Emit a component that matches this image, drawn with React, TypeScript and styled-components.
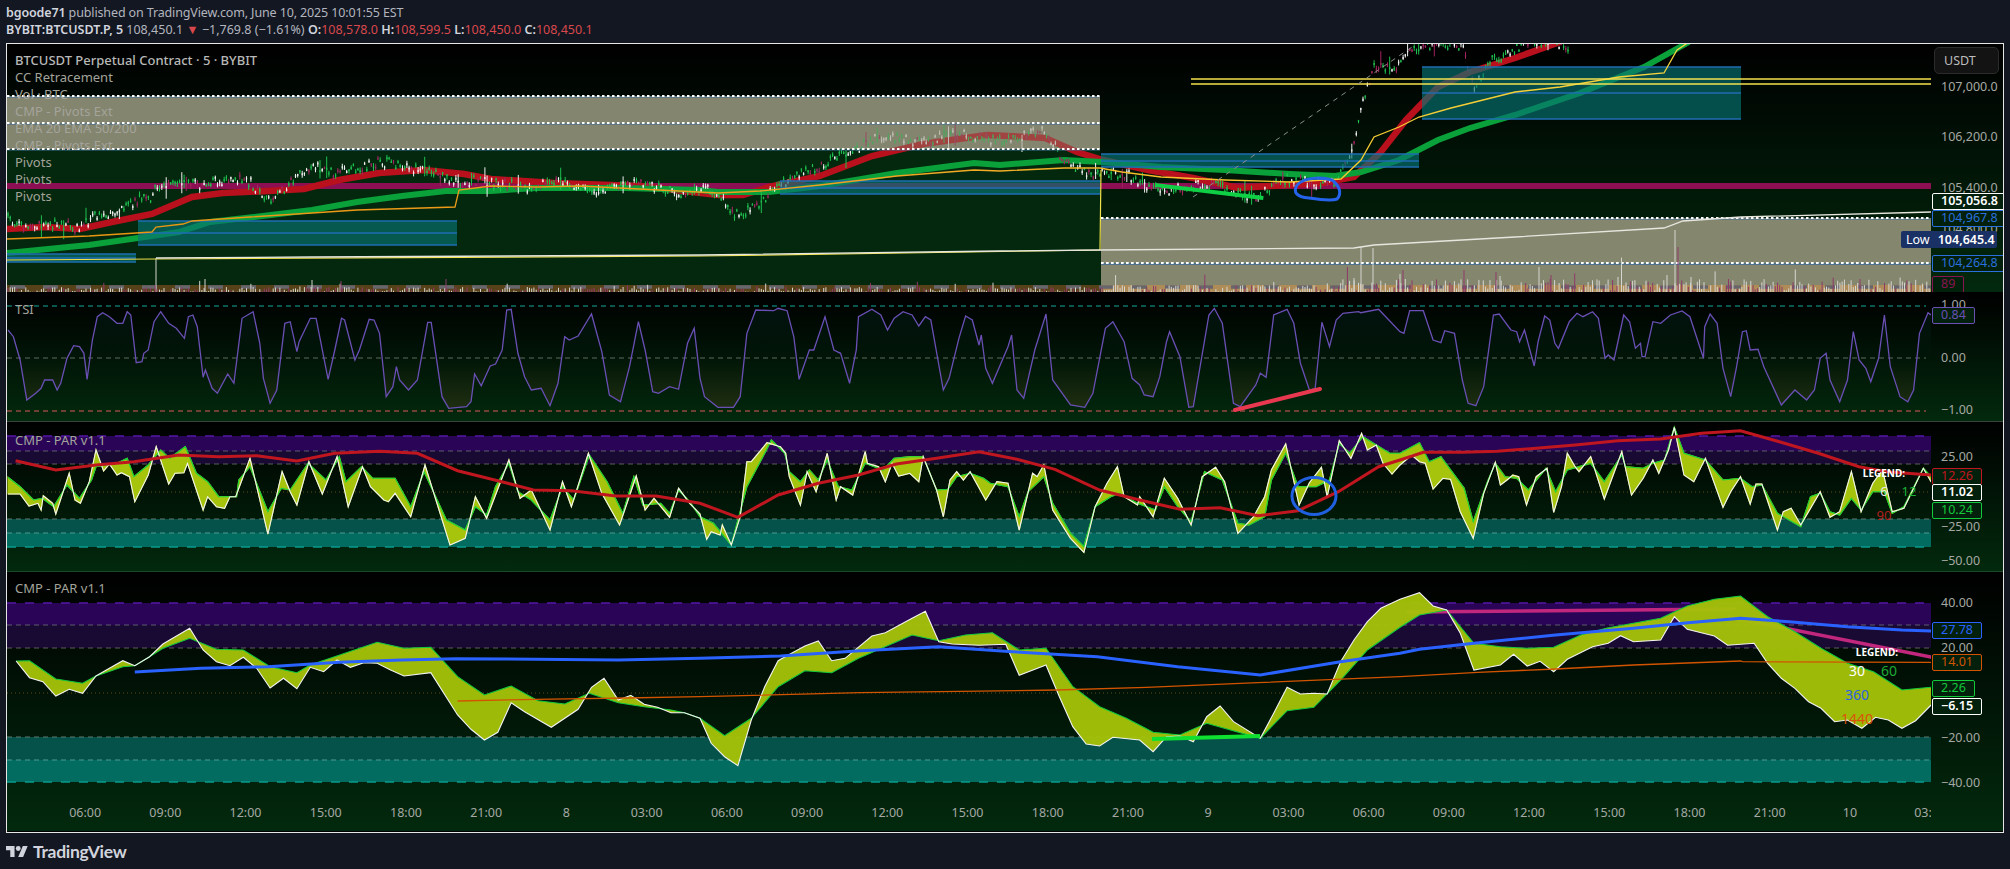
import styled, { createGlobalStyle } from 'styled-components';

type Pt = number[];

const GlobalStyle = createGlobalStyle`
  html, body {
    margin: 0;
    padding: 0;
    background: #131722;
    font-family: "Noto Sans", "Open Sans", sans-serif;
  }
`;

const Page = styled.div`
  width: 2010px;
  height: 869px;
  overflow: hidden;
  background: #131722;
`;

const Header = styled.header`
  height: 43px;
  padding: 4px 6px 0 6px;
  box-sizing: border-box;
  font-size: 12.5px;
  line-height: 17px;
  color: #b2b5be;
`;

const HeaderRow = styled.div<{ $tight?: boolean }>`
  white-space: nowrap;
  letter-spacing: ${(p) => (p.$tight ? '-0.13px' : '0')};
`;

const Strong = styled.span`
  font-weight: 600;
  color: #d1d4dc;
`;

const Down = styled.span`
  color: #d9484c;
`;

const Frame = styled.div`
  width: 1998px;
  height: 790px;
  margin-left: 6px;
  box-sizing: border-box;
  border: 1px solid #e6e6e6;
`;

const Pane = styled.div<{ $h: number; $line?: string }>`
  height: ${(p) => p.$h}px;
  box-sizing: border-box;
  display: flex;
  flex-direction: column;
  overflow: hidden;
  background: linear-gradient(#000000, #02290d);
  border-bottom: 1px solid ${(p) => p.$line || 'transparent'};
`;

const PaneRow = styled.div`
  flex: 1;
  min-height: 0;
  display: flex;
`;

const Plot = styled.div`
  width: 1924px;
  position: relative;
  flex: none;
`;

const ChartSvg = styled.svg`
  display: block;
`;

const Legend = styled.div`
  position: absolute;
  left: 8px;
  top: 8px;
  display: flex;
  flex-direction: column;
  font-size: 13px;
  line-height: 17px;
  color: #a3a39b;
`;

const LegendTitle = styled.div`
  font-weight: 500;
  color: #b8b8b8;
`;

const PaneTitle = styled.div<{ $top: number }>`
  position: absolute;
  left: 8px;
  top: ${(p) => p.$top}px;
  font-size: 13px;
  line-height: 17px;
  color: #a3a39b;
`;

const Axis = styled.div`
  flex: 1;
  position: relative;
`;

const AxisLabel = styled.div<{ $y: number }>`
  position: absolute;
  left: 10px;
  top: ${(p) => p.$y - 9}px;
  font-size: 12.5px;
  line-height: 18px;
  color: #a6a8a4;
  white-space: nowrap;
`;

const Tag = styled.div<{ $y: number; $color: string; $bold?: boolean }>`
  position: absolute;
  left: 1px;
  top: ${(p) => p.$y}px;
  height: 17px;
  box-sizing: border-box;
  padding: 0 8px;
  border: 1.5px solid ${(p) => p.$color};
  border-radius: 2px;
  background: #02200b;
  font-size: 12.5px;
  line-height: 14px;
  font-weight: ${(p) => (p.$bold ? 600 : 400)};
  color: ${(p) => p.$color};
  white-space: nowrap;
`;

const LowTag = styled.div<{ $y: number }>`
  position: absolute;
  left: -30px;
  top: ${(p) => p.$y}px;
  width: 96px;
  height: 17px;
  display: flex;
  gap: 8px;
  padding-left: 5px;
  box-sizing: border-box;
  border-radius: 2px;
  background: #1a3166;
  color: #ffffff;
  font-size: 12.5px;
  line-height: 17px;
`;

const LowValue = styled.span`
  font-weight: 600;
`;

const CurrencyButton = styled.div`
  position: absolute;
  left: 3px;
  top: 3px;
  width: 65px;
  height: 27px;
  box-sizing: border-box;
  padding-left: 9px;
  border: 1px solid #2b2b2b;
  border-radius: 5px;
  background: #131313;
  color: #bcbcbc;
  font-size: 12.5px;
  line-height: 25px;
`;

const TimeAxis = styled.div`
  height: 32px;
  width: 1924px;
  flex: none;
  display: flex;
  padding-left: 38px;
  box-sizing: border-box;
  overflow: hidden;
`;

const TimeLabel = styled.div`
  flex: 0 0 80.23px;
  text-align: center;
  font-size: 12.5px;
  line-height: 28px;
  color: #a6a8a4;
  white-space: nowrap;
`;

const Footer = styled.footer`
  height: 36px;
  padding-left: 6px;
  display: flex;
  align-items: center;
  gap: 5px;
  color: #d1d4dc;
  font-family: Lato, "Noto Sans", sans-serif;
  font-size: 17.5px;
  font-weight: 700;
  letter-spacing: -0.3px;
`;

// flat lists read off the reference, one list per zoomed crop
const z = (ox: number, sx: number, oy: number, a: number[]): Pt[] => {
  const out: Pt[] = [];
  for (let i = 0; i < a.length; i += 2) out.push([ox + a[i] / sx, oy + a[i + 1] / 3]);
  return out;
};
const pts = (p: Pt[]) => p.map((q) => q[0].toFixed(1) + ',' + q[1].toFixed(1)).join(' ');
const between = (a: Pt[], b: Pt[]) => pts([...a, ...[...b].reverse()]);

const at = (path: Pt[], x: number) => {
  for (let i = 1; i < path.length; i++) {
    if (x <= path[i][0]) {
      const t = (x - path[i - 1][0]) / (path[i][0] - path[i - 1][0]);
      return path[i - 1][1] + t * (path[i][1] - path[i - 1][1]);
    }
  }
  return path[path.length - 1][1];
};

let seed = 71;
const rnd = () => {
  seed = (seed * 16807) % 2147483647;
  return seed / 2147483647;
};

const STEP = 2.2286;

const mid: Pt[] = [[7, 217], [45, 227], [80, 230], [94, 213], [125, 207], [152, 200], [156, 187], [187, 177], [205, 187], [250, 180], [268, 197], [286, 187], [312, 170], [335, 170], [357, 165], [402, 168], [424, 165], [446, 177], [459, 187], [509, 180], [536, 190], [580, 183], [603, 187], [634, 185], [700, 190], [718, 199], [737, 215], [769, 192], [820, 167], [833, 154], [897, 138], [974, 138], [1045, 135], [1064, 160], [1103, 173], [1154, 186], [1193, 187], [1258, 193], [1290, 183], [1335, 180], [1354, 147], [1364, 103], [1374, 70], [1399, 63], [1412, 45], [1464, 50], [1467, 63], [1474, 88], [1490, 57], [1528, 45], [1560, 44]];

const buildCandles = () => {
  const wick: Record<string, string> = { up: '', flat: '', down: '' };
  const body: Record<string, string> = { up: '', flat: '', down: '' };
  for (let x = 8; x < 1570; x += STEP) {
    const y = at(mid, x) + 4 * Math.sin(x / 13) + (rnd() - 0.5) * 10;
    const big = rnd() > 0.93 ? 10 : 0;
    const t = y - 1 - rnd() * 3 - big * rnd();
    const b = y + 1 + rnd() * 3 + big * rnd();
    const r = rnd();
    const k = r < 0.47 ? 'up' : r < 0.8 ? 'flat' : 'down';
    wick[k] += `M${x.toFixed(1)} ${t.toFixed(1)}V${b.toFixed(1)}`;
    body[k] += `M${x.toFixed(1)} ${(y - 1).toFixed(1)}V${(y + 1).toFixed(1)}`;
  }
  return { wick, body };
};

const buildVolume = () => {
  let light = '';
  let dark = '';
  for (let x = 8; x < 1930; x += STEP) {
    const late = x > 1100 && x < 1340 ? 1.4 : x >= 1340 ? 2.6 : 1;
    const h = 1 + rnd() * 5 * late + (rnd() > 0.94 ? rnd() * 9 * late : 0);
    const s = `M${x.toFixed(1)} 293V${(293 - h).toFixed(1)}`;
    if (rnd() > 0.68) dark += s;
    else light += s;
  }
  const lightSpikes = [[156, 258], [205, 279], [312, 280], [1354, 278], [1361, 247], [1373, 248], [1618, 277], [1667, 275], [1675, 230], [1691, 277], [1400, 274], [1500, 276]];
  const darkSpikes = [[341, 281], [446, 279], [1403, 270], [1464, 270], [1496, 272], [1551, 275], [1678, 247]];
  lightSpikes.forEach((s) => (light += `M${s[0]} 293V${s[1]}`));
  darkSpikes.forEach((s) => (dark += `M${s[0]} 293V${s[1]}`));
  return { light, dark };
};

const candles = buildCandles();
const volume = buildVolume();

const ema20: Pt[] = [[7, 229], [45, 227], [80, 229], [112, 222], [152, 214], [192, 197], [223, 193], [268, 191], [304, 189], [339, 180], [379, 173], [424, 170], [464, 174], [491, 179], [554, 183], [640, 186], [718, 195], [743, 195], [769, 187], [820, 176], [872, 156], [923, 144], [987, 135], [1045, 138], [1077, 152], [1103, 160], [1148, 170], [1193, 178], [1238, 188], [1271, 186], [1322, 183], [1354, 177], [1380, 153], [1406, 120], [1438, 87], [1470, 72], [1515, 58], [1560, 42]];
const ema50: Pt[] = [[7, 253], [89, 245], [138, 238], [179, 232], [210, 222], [254, 217], [312, 210], [357, 202], [402, 196], [446, 191], [491, 191], [536, 188], [625, 188], [700, 190], [718, 192], [769, 192], [820, 186], [897, 173], [974, 163], [1000, 165], [1064, 160], [1103, 162], [1161, 167], [1225, 170], [1290, 174], [1335, 176], [1361, 172], [1399, 160], [1438, 140], [1470, 128], [1515, 115], [1580, 93], [1644, 67], [1689, 42]];
const ema200: Pt[] = [[7, 239], [89, 236], [152, 232], [156, 227], [183, 224], [192, 221], [250, 217], [312, 213], [357, 210], [455, 207], [459, 190], [491, 186], [536, 187], [580, 186], [718, 193], [760, 191], [820, 185], [897, 176], [974, 170], [1000, 171], [1064, 168], [1100, 168], [1122, 172], [1161, 177], [1225, 180], [1290, 182], [1341, 179], [1361, 160], [1374, 137], [1399, 127], [1419, 117], [1451, 108], [1515, 92], [1560, 87], [1619, 77], [1664, 73], [1677, 50], [1689, 42]];
const vwap: Pt[] = [[156, 258], [312, 257], [700, 255], [1000, 251], [1100, 250], [1354, 248], [1374, 245], [1515, 237], [1664, 228], [1683, 221], [1741, 217], [1931, 212]];
const yellowLine: Pt[] = [[7, 260], [156, 259], [700, 256], [1100, 250], [1101, 170]];

const tsi: Pt[] = [
  ...z(0, 2.24, 290, [18, 120, 30, 140, 45, 210, 60, 330, 80, 310, 92, 295, 100, 270, 118, 270, 128, 300, 136, 280, 150, 205, 165, 167, 178, 170, 188, 190, 195, 268, 207, 150, 218, 80, 230, 68, 245, 80, 262, 100, 275, 100, 285, 65, 293, 75, 305, 218, 318, 215, 322, 190, 332, 180, 345, 95, 360, 65, 378, 100, 395, 115, 413, 145, 422, 80, 432, 75, 442, 110, 455, 262, 460, 240, 475, 295, 487, 310, 510, 252, 524, 280, 542, 85, 567, 65, 582, 160, 590, 265, 605, 340, 620, 300, 638, 100, 650, 95, 665, 185, 670, 155, 695, 85, 708, 85, 735, 268, 750, 180, 765, 85, 772, 90, 795, 210, 805, 180, 827, 88, 838, 90, 850, 130, 865, 320, 880, 290, 888, 230, 895, 270, 915, 300, 935, 270, 958, 97, 966, 97, 990, 320, 1005, 355, 1045, 350, 1055, 335, 1063, 252, 1078, 287, 1098, 228, 1110, 222, 1125, 180, 1135, 60, 1145, 58, 1160, 190, 1175, 260, 1190, 300, 1212, 295, 1232, 347, 1250, 280, 1265, 140, 1275, 150, 1295, 138, 1325, 72, 1348, 185, 1365, 315, 1390, 335, 1410, 230, 1430, 95, 1445, 180, 1462, 305, 1475, 310, 1500, 290, 1520, 298, 1540, 160, 1555, 115]),
  ...z(700, 2.24, 290, [0, 265, 10, 320, 40, 352, 75, 352, 90, 320, 105, 130, 125, 60, 165, 62, 175, 55, 195, 62, 210, 140, 222, 268, 245, 180, 255, 180, 280, 80, 300, 180, 315, 190, 335, 280, 350, 180, 355, 80, 385, 58, 405, 75, 420, 120, 435, 85, 455, 65, 475, 75, 490, 108, 505, 80, 517, 90, 545, 300, 558, 265, 580, 145, 595, 78, 610, 90, 625, 165, 630, 135, 640, 235, 655, 280, 690, 170, 698, 135, 710, 300, 725, 325, 750, 180, 775, 72, 790, 270, 830, 345, 862, 352, 880, 310, 908, 115, 925, 95, 950, 155, 968, 265, 985, 285, 995, 315, 1015, 320, 1030, 260, 1045, 155, 1052, 125, 1075, 200, 1095, 352, 1105, 350, 1140, 75, 1152, 55, 1170, 100, 1195, 340, 1210, 350, 1245, 285, 1255, 250, 1268, 262, 1285, 75, 1315, 58, 1330, 100, 1345, 220, 1365, 300, 1378, 295, 1393, 97, 1410, 170, 1425, 90, 1440, 70, 1475, 65, 1480, 68, 1520, 58]),
  ...z(1400, 2.57, 290, [0, 125, 10, 130, 25, 62, 60, 62, 85, 150, 105, 158, 115, 122, 140, 130, 160, 270, 175, 340, 195, 347, 215, 290, 240, 75, 255, 72, 285, 120, 300, 125, 307, 155, 320, 120, 345, 228, 355, 155, 372, 78, 385, 90, 398, 160, 407, 175, 435, 95, 455, 70, 470, 80, 495, 65, 510, 85, 527, 205, 535, 195, 550, 210, 575, 75, 590, 95, 605, 175, 618, 160, 622, 200, 630, 200, 650, 95, 670, 100, 695, 75, 725, 63, 745, 80, 780, 205, 783, 110, 797, 72, 815, 100, 830, 235, 850, 320, 865, 230, 880, 125, 890, 122, 900, 180, 920, 178, 935, 230, 980, 345, 1015, 300, 1045, 330, 1065, 300, 1080, 205, 1095, 190, 1105, 270, 1130, 335, 1150, 270, 1165, 125, 1180, 210, 1197, 235, 1210, 275, 1230, 205, 1245, 75, 1260, 230, 1285, 320, 1305, 335, 1320, 300, 1335, 130, 1357, 68, 1365, 75]),
];

const par1White: Pt[] = [
  ...z(0, 2.24, 290, [18, 612, 45, 612, 65, 648, 85, 640, 92, 660, 97, 617, 118, 640, 125, 672, 155, 550, 168, 630, 180, 640, 200, 575, 215, 480, 232, 543, 245, 522, 262, 555, 272, 548, 290, 560, 302, 635, 332, 555, 350, 470, 378, 582, 392, 550, 412, 548, 420, 520, 455, 660, 465, 620, 485, 650, 503, 655, 515, 620, 528, 620, 560, 505, 600, 732, 632, 545, 650, 605, 665, 645, 692, 515, 722, 612, 755, 500, 780, 650, 812, 530, 830, 590, 860, 630, 870, 635, 885, 610, 920, 680, 952, 525, 1008, 765, 1042, 745, 1065, 620, 1090, 685, 1140, 510, 1165, 625, 1190, 600, 1232, 720, 1260, 575, 1280, 650, 1318, 490, 1348, 610, 1388, 705, 1425, 558, 1445, 660, 1465, 625, 1500, 682, 1520, 595, 1545, 640]),
  ...z(700, 2.24, 290, [0, 672, 15, 748, 25, 725, 45, 735, 50, 705, 70, 765, 90, 680, 105, 515, 115, 515, 150, 458, 180, 470, 192, 490, 200, 560, 225, 645, 240, 545, 260, 605, 285, 490, 305, 630, 315, 590, 342, 615, 370, 485, 375, 520, 400, 530, 415, 575, 430, 520, 445, 558, 470, 550, 490, 575, 500, 500, 530, 600, 545, 680, 560, 570, 575, 545, 590, 570, 605, 545, 640, 630, 665, 575, 690, 580, 715, 720, 745, 550, 755, 560, 770, 525, 790, 660, 830, 745, 860, 787, 885, 650, 912, 580, 935, 530, 950, 620, 980, 645, 985, 620, 1015, 680, 1040, 565, 1070, 625, 1100, 705, 1125, 560, 1155, 532, 1175, 575, 1205, 730, 1240, 680, 1265, 620, 1280, 540, 1312, 462, 1342, 645, 1365, 578, 1392, 532, 1405, 620, 1432, 452, 1458, 505, 1482, 430, 1495, 480, 1515, 465, 1530, 520, 1550, 552]),
  ...z(1400, 2.57, 290, [0, 525, 30, 495, 50, 515, 65, 520, 85, 597, 110, 565, 130, 568, 155, 665, 188, 745, 215, 610, 245, 517, 258, 585, 275, 570, 290, 555, 305, 560, 325, 645, 350, 560, 378, 535, 395, 667, 415, 590, 430, 490, 450, 530, 460, 545, 490, 500, 525, 627, 570, 485, 595, 615, 625, 565, 650, 510, 665, 550, 690, 480, 705, 412, 730, 555, 755, 575, 785, 505, 830, 652, 850, 605, 875, 560, 900, 642, 915, 582, 930, 582, 970, 720, 985, 665, 1005, 655, 1030, 705, 1080, 605, 1105, 682, 1130, 665, 1160, 545, 1185, 665, 1215, 580, 1240, 540, 1265, 665, 1295, 655, 1345, 535, 1365, 575]),
];
const par1Green: Pt[] = [
  ...z(0, 2.24, 290, [18, 562, 45, 590, 75, 630, 95, 625, 120, 650, 150, 585, 178, 625, 205, 570, 215, 530, 262, 520, 285, 505, 300, 560, 332, 525, 360, 480, 380, 505, 415, 470, 440, 550, 465, 575, 490, 620, 530, 620, 535, 570, 560, 530, 600, 665, 630, 595, 650, 600, 690, 520, 730, 570, 760, 500, 775, 575, 810, 530, 835, 565, 885, 565, 920, 650, 950, 545, 1000, 690, 1042, 720, 1065, 650, 1090, 675, 1110, 590, 1140, 520, 1160, 605, 1190, 630, 1232, 690, 1260, 590, 1285, 630, 1320, 495, 1360, 575, 1395, 670, 1420, 560, 1440, 645, 1480, 640, 1500, 670, 1520, 600, 1545, 635]),
  ...z(700, 2.24, 290, [0, 680, 30, 700, 70, 765, 105, 590, 145, 490, 160, 450, 190, 490, 200, 545, 225, 575, 245, 540, 265, 570, 285, 510, 310, 590, 340, 600, 370, 520, 410, 540, 435, 505, 470, 500, 500, 500, 530, 600, 555, 598, 575, 560, 605, 550, 635, 565, 650, 580, 690, 590, 715, 680, 735, 605, 770, 560, 790, 640, 830, 730, 860, 770, 885, 650, 920, 620, 940, 610, 980, 640, 1020, 660, 1040, 590, 1070, 650, 1100, 695, 1130, 545, 1170, 570, 1205, 700, 1230, 705, 1265, 680, 1280, 570, 1312, 490, 1340, 590, 1380, 590, 1410, 570, 1432, 460, 1455, 490, 1485, 440, 1515, 465, 1545, 490]),
  ...z(1400, 2.57, 290, [0, 490, 50, 458, 75, 515, 105, 500, 165, 595, 188, 695, 225, 575, 245, 520, 270, 560, 300, 565, 330, 600, 375, 535, 400, 605, 430, 540, 490, 520, 525, 575, 570, 495, 580, 530, 625, 535, 650, 520, 680, 510, 705, 412, 730, 490, 785, 510, 830, 570, 875, 565, 905, 590, 930, 585, 970, 670, 1030, 710, 1055, 620, 1080, 610, 1105, 665, 1130, 675, 1160, 625, 1185, 660, 1215, 605, 1245, 605, 1265, 670, 1295, 650, 1345, 535, 1365, 560]),
];
const par1Red: Pt[] = [
  ...z(0, 2.24, 290, [35, 512, 125, 540, 215, 525, 300, 515, 400, 495, 490, 500, 575, 497, 665, 513, 750, 490, 850, 484, 935, 490, 1025, 542, 1115, 572, 1195, 600, 1280, 602, 1380, 618, 1470, 618]),
  ...z(700, 2.24, 290, [0, 640, 85, 682, 175, 615, 265, 580, 355, 555, 440, 522, 530, 505, 625, 485, 710, 508, 795, 538, 895, 600, 985, 630, 1075, 658, 1165, 653, 1250, 677, 1340, 662, 1430, 605, 1520, 530]),
  ...z(1400, 2.57, 290, [0, 510, 60, 487, 160, 487, 250, 484, 350, 475, 450, 465, 560, 452, 670, 447, 775, 430, 875, 422, 975, 455, 1075, 490, 1180, 530, 1250, 545, 1365, 555]),
];

const par2White: Pt[] = [
  ...z(0, 2.24, 570, [36, 273, 66, 323, 96, 335, 125, 378, 155, 358, 185, 370, 215, 318, 245, 295, 275, 272, 302, 287, 335, 260, 365, 222, 425, 175, 455, 240, 485, 275, 515, 287, 545, 262, 575, 295, 605, 354, 635, 325, 665, 356, 695, 292, 725, 305, 755, 270, 785, 292, 815, 278, 845, 280, 875, 300, 905, 318, 965, 308, 1025, 435, 1055, 478, 1085, 510, 1115, 487, 1145, 398, 1175, 425, 1235, 472, 1295, 418, 1325, 352, 1353, 325, 1385, 390, 1413, 376, 1443, 403, 1473, 412, 1503, 428, 1533, 428]),
  ...z(700, 2.24, 570, [0, 445, 25, 520, 55, 560, 85, 587, 115, 450, 145, 350, 175, 272, 205, 250, 235, 228, 265, 213, 295, 272, 325, 265, 385, 198, 415, 188, 475, 145, 505, 124, 535, 215, 565, 222, 625, 226, 685, 223, 715, 316, 775, 285, 805, 380, 835, 470, 865, 522, 895, 528, 925, 502, 985, 510, 1015, 545, 1045, 500, 1075, 498, 1105, 515, 1135, 440, 1165, 408, 1195, 455, 1255, 505, 1285, 430, 1315, 352, 1345, 372, 1375, 370, 1405, 372, 1435, 275, 1465, 210, 1495, 155, 1525, 115]),
  ...z(1400, 2.57, 570, [0, 88, 50, 68, 85, 108, 120, 120, 155, 190, 190, 300, 258, 285, 292, 253, 327, 288, 360, 274, 395, 305, 430, 268, 495, 230, 535, 220, 567, 197, 600, 215, 670, 210, 705, 140, 738, 178, 808, 198, 842, 226, 910, 220, 945, 280, 980, 325, 1015, 355, 1050, 395, 1082, 415, 1117, 455, 1150, 450, 1187, 475, 1222, 442, 1255, 450, 1290, 475, 1325, 452, 1365, 405]),
];
const par2Green: Pt[] = [
  ...z(0, 2.24, 570, [36, 273, 66, 272, 125, 327, 185, 340, 215, 318, 275, 290, 302, 287, 335, 260, 365, 235, 425, 205, 485, 238, 545, 240, 605, 290, 665, 308, 695, 285, 845, 217, 905, 235, 965, 232, 1025, 320, 1085, 375, 1145, 348, 1205, 392, 1265, 402, 1320, 370, 1385, 398, 1443, 410, 1503, 420, 1533, 428]),
  ...z(700, 2.24, 570, [0, 445, 55, 497, 115, 445, 175, 350, 235, 302, 295, 308, 355, 265, 475, 195, 535, 212, 595, 195, 655, 188, 715, 240, 775, 235, 835, 350, 895, 410, 955, 445, 1015, 487, 1075, 495, 1135, 460, 1255, 505, 1315, 422, 1375, 412, 1435, 330, 1495, 240]),
  ...z(1400, 2.57, 570, [0, 172, 50, 135, 120, 120, 190, 220, 258, 230, 327, 235, 395, 232, 465, 195, 530, 175, 670, 145, 738, 108, 808, 88, 875, 78, 945, 140, 1015, 185, 1082, 235, 1150, 280, 1217, 305, 1290, 360, 1365, 352]),
];
const par2Blue: Pt[] = [
  ...z(0, 2.24, 570, [302, 306, 450, 295, 600, 290, 760, 277, 900, 270, 1020, 266, 1200, 268, 1385, 270]),
  ...z(700, 2.24, 570, [0, 265, 180, 258, 350, 243, 535, 230, 700, 245, 890, 260, 1070, 290, 1255, 315, 1435, 275]),
  ...z(1400, 2.57, 570, [0, 250, 50, 238, 190, 220, 400, 195, 600, 175, 740, 158, 875, 145, 1000, 155, 1150, 170, 1290, 180, 1365, 183]),
];
const par2Orange: Pt[] = [
  ...z(0, 2.24, 570, [1025, 393, 1200, 388, 1400, 384]),
  ...z(700, 2.24, 570, [0, 380, 360, 368, 800, 360, 1000, 352, 1250, 338]),
  ...z(1400, 2.57, 570, [0, 320, 200, 307, 400, 297, 600, 285, 875, 273, 880, 275, 1365, 277]),
];

const TIME_LABELS = ['06:00', '09:00', '12:00', '15:00', '18:00', '21:00', '8', '03:00', '06:00', '09:00', '12:00', '15:00', '18:00', '21:00', '9', '03:00', '06:00', '09:00', '12:00', '15:00', '18:00', '21:00', '10', '03:00'];

const LEGEND = ['CC Retracement', 'Vol · BTC', 'CMP - Pivots Ext', 'EMA 20 EMA 50/200', 'CMP - Pivots Ext', 'Pivots', 'Pivots', 'Pivots'];

const Box = ({ x, w, y1, y2, y3 }: { x: number; w: number; y1: number; y2: number; y3: number }) => (
  <g>
    <rect x={x} y={y1} width={w} height={y3 - y1} fill="rgb(6,115,115)" fillOpacity={0.65} />
    {[y1, y2, y3].map((y) => (
      <line key={y} x1={x} x2={x + w} y1={y} y2={y} stroke="#1f6db3" strokeWidth={1.5} />
    ))}
  </g>
);

const GrayBand = ({ x, w, y1, y2, y3 }: { x: number; w: number; y1: number; y2: number; y3: number }) => (
  <g>
    {[y1, y2, y3].map((y) => (
      <g key={y}>
        <line x1={x} x2={x + w} y1={y + 1} y2={y + 1} stroke="#3f6d96" strokeWidth={1} />
        <line x1={x} x2={x + w} y1={y} y2={y} stroke="#ffffff" strokeWidth={2} strokeDasharray="2.5 2.5" />
      </g>
    ))}
  </g>
);

const MainChart = () => (
  <ChartSvg width={1924} height={249} viewBox="7 44 1924 249">
    <defs>
      <linearGradient id="ema200Stroke" gradientUnits="userSpaceOnUse" x1="7" x2="1689" y1="0" y2="0">
        <stop offset="0" stopColor="#e8940f" />
        <stop offset="0.5" stopColor="#f0a020" />
        <stop offset="0.75" stopColor="#f7c82e" />
        <stop offset="1" stopColor="#f5d53f" />
      </linearGradient>
    </defs>
    <rect x={7} y={149} width={1093} height={144} fill="#03280e" />
    <rect x={7} y={96} width={1093} height={53} fill="#84866e" />
    <rect x={1101} y={218} width={830} height={75} fill="#84866e" />
    <rect x={7} y={183} width={1924} height={6} fill="#8b0f52" />

    <polyline points={pts(ema20)} fill="none" stroke="#b8101c" strokeWidth={6.5} />
    <polyline points={pts(ema50)} fill="none" stroke="#0aa03a" strokeWidth={6} />
    <path d={candles.wick.up} stroke="#1fbf4f" strokeWidth={1} />
    <path d={candles.wick.flat} stroke="#f0f0f0" strokeWidth={1} />
    <path d={candles.wick.down} stroke="#a0245f" strokeWidth={1} />
    <path d={candles.body.up} stroke="#1fbf4f" strokeWidth={1.3} />
    <path d={candles.body.flat} stroke="#f0f0f0" strokeWidth={1.3} />
    <path d={candles.body.down} stroke="#a0245f" strokeWidth={1.3} />

    <rect x={7} y={96} width={1093} height={53} fill="#84866e" fillOpacity={0.45} />
    <Box x={138} w={319} y1={221} y2={233} y3={245} />
    <Box x={7} w={129} y1={254} y2={258} y3={262} />
    <Box x={780} w={320} y1={181} y2={188} y3={194} />
    <Box x={1101} w={318} y1={154} y2={161} y3={167} />
    <Box x={1422} w={319} y1={67} y2={93} y3={119} />

    <GrayBand x={7} w={1093} y1={96} y2={123} y3={149} />
    <GrayBand x={1101} w={830} y1={218} y2={263} y3={263} />

    <rect x={7} y={285} width={1093} height={8} fill="rgb(255,117,46)" fillOpacity={0.33} />
    <rect x={1101} y={285} width={830} height={8} fill="rgb(255,150,46)" fillOpacity={0.35} />
    <line x1={10} x2={1931} y1={287} y2={287} stroke="#66666c" strokeWidth={3.5} strokeDasharray="15 18" />
    <path d={volume.light} stroke="#d6d6d0" strokeWidth={1} />
    <path d={volume.dark} stroke="#8f3a68" strokeWidth={1} />

    <polyline points={pts(ema200)} fill="none" stroke="url(#ema200Stroke)" strokeWidth={1.3} />
    <polyline points={pts(yellowLine)} fill="none" stroke="#f2e24a" strokeWidth={1.2} />
    <polyline points={pts(vwap)} fill="none" stroke="#e6e6df" strokeWidth={1.3} />
    <line x1={1191} x2={1931} y1={79} y2={79} stroke="#f5e24f" strokeWidth={1.5} />
    <line x1={1191} x2={1931} y1={84} y2={84} stroke="#f5e24f" strokeWidth={1.5} />
    <line x1={1193} x2={1412} y1={197} y2={47} stroke="#8a8f8a" strokeWidth={1} strokeDasharray="5 5" />

    <line x1={1155} x2={1263} y1={185} y2={198} stroke="#0fcf45" strokeWidth={4} />
    <path d="M1297 185C1293 192 1296 197 1309 198C1322 200 1332 201 1337 199C1342 194 1340 186 1332 180C1322 177 1305 177 1297 185" fill="none" stroke="#2563eb" strokeWidth={3} />
  </ChartSvg>
);

const TsiChart = () => (
  <ChartSvg width={1924} height={129} viewBox="7 293 1924 129">
    <defs>
      <linearGradient id="tsiFill" gradientUnits="userSpaceOnUse" x1="0" x2="0" y1="306" y2="411">
        <stop offset="0" stopColor="#0a5a55" stopOpacity={0.16} />
        <stop offset="0.5" stopColor="#0a5a55" stopOpacity={0} />
        <stop offset="0.5" stopColor="#7a4a20" stopOpacity={0} />
        <stop offset="1" stopColor="#7a4a20" stopOpacity={0.25} />
      </linearGradient>
    </defs>
    <polygon points={pts([[8, 358], ...tsi, [1931, 358]])} fill="url(#tsiFill)" />
    <line x1={7} x2={1926} y1={306} y2={306} stroke="#12a89a" strokeDasharray="5 4" />
    <line x1={7} x2={1926} y1={358} y2={358} stroke="#5f6a63" strokeDasharray="5 4" />
    <line x1={7} x2={1926} y1={411} y2={411} stroke="#d85a5a" strokeDasharray="5 4" />
    <polyline points={pts(tsi)} fill="none" stroke="#6a4fb5" strokeWidth={1.3} />
    <line x1={1235} x2={1320} y1={410} y2={389} stroke="#e8384f" strokeWidth={4} strokeLinecap="round" />
  </ChartSvg>
);

const Bands = ({ y, stops }: { y: number[]; stops: number }) => (
  <g>
    <rect x={7} y={y[0]} width={1924} height={y[1] - y[0]} fill="#2a0557" />
    <rect x={7} y={y[1]} width={1924} height={y[2] - y[1]} fill="#190a33" />
    <rect x={7} y={y[4]} width={1924} height={y[5] - y[4]} fill="#04524a" />
    <rect x={7} y={y[5]} width={1924} height={y[6] - y[5]} fill="#026c60" />
    <line x1={7} x2={1931} y1={y[0]} y2={y[0]} stroke="#5417a6" strokeWidth={1.5} strokeDasharray="9 9" />
    <line x1={7} x2={1931} y1={y[1]} y2={y[1]} stroke="#5f5a70" strokeDasharray="5 4" />
    <line x1={7} x2={1931} y1={y[2]} y2={y[2]} stroke="#5c5c5c" strokeDasharray="5 4" />
    <line x1={7} x2={1931} y1={y[3]} y2={y[3]} stroke="#5c4f14" strokeDasharray="1 3" />
    <line x1={7} x2={1931} y1={y[4]} y2={y[4]} stroke="#5c7a70" strokeDasharray="5 4" />
    <line x1={7} x2={1931} y1={y[5]} y2={y[5]} stroke="#4d9a8e" strokeDasharray="5 4" />
    <line x1={7} x2={1931} y1={y[6]} y2={y[6]} stroke="#089a8e" strokeWidth={1.5} strokeDasharray={`9 ${stops}`} />
  </g>
);

const LegendNote = ({ x, y, color, size = 13, bold, children }: { x: number; y: number; color: string; size?: number; bold?: boolean; children: string }) => (
  <text x={x} y={y} fill={color} fontSize={size} fontWeight={bold ? 700 : 400} textAnchor="middle" dominantBaseline="middle" fontFamily='"Noto Sans", sans-serif'>
    {children}
  </text>
);

const ParFast = () => (
  <ChartSvg width={1924} height={150} viewBox="7 422 1924 150">
    <Bands y={[436, 451, 464, 492, 519, 533, 547]} stops={9} />
    <polygon points={between(par1White, par1Green)} fill="#a6c40c" stroke="#a6c40c" strokeWidth={1.2} />
    <polyline points={pts(par1Green)} fill="none" stroke="#14d23c" strokeWidth={1.1} />
    <polyline points={pts(par1White)} fill="none" stroke="#f2f2f2" strokeWidth={1.1} />
    <polyline points={pts(par1Red)} fill="none" stroke="#c0161f" strokeWidth={3} />
    <ellipse cx={1314} cy={496} rx={22} ry={18.5} fill="none" stroke="#1f5fe0" strokeWidth={3} />
    <LegendNote x={1884} y={474} color="#ffffff" size={10} bold>LEGEND:</LegendNote>
    <LegendNote x={1884} y={493} color="#e8e8e8">6</LegendNote>
    <LegendNote x={1909} y={493} color="#19b536">12</LegendNote>
    <LegendNote x={1884} y={517} color="#b01e1e">90</LegendNote>
  </ChartSvg>
);

const ParSlow = () => (
  <ChartSvg width={1924} height={228} viewBox="7 572 1924 228">
    <Bands y={[603, 625, 648, 693, 737, 760, 782]} stops={9} />
    <polyline points="1408,612 1734,609" fill="none" stroke="#c2277e" strokeWidth={3.5} strokeLinecap="round" />
    <polyline points="1729,617 1931,657" fill="none" stroke="#c2277e" strokeWidth={3.5} strokeLinecap="round" />
    <polygon points={between(par2White, par2Green)} fill="#a4c208" fillOpacity={0.96} />
    <polyline points={pts(par2Green)} fill="none" stroke="#14c83c" strokeWidth={1.1} />
    <polyline points={pts(par2White)} fill="none" stroke="#f2f2f2" strokeWidth={1.1} />
    <polyline points={pts(par2Orange)} fill="none" stroke="#d35400" strokeWidth={1.3} />
    <polyline points={pts(par2Blue)} fill="none" stroke="#2962ff" strokeWidth={3} />
    <line x1={1152} x2={1260} y1={739} y2={736} stroke="#10e030" strokeWidth={4} />
    <LegendNote x={1877} y={653} color="#ffffff" size={10} bold>LEGEND:</LegendNote>
    <LegendNote x={1857} y={672} color="#ffffff" size={14}>30</LegendNote>
    <LegendNote x={1889} y={672} color="#1faa34" size={14}>60</LegendNote>
    <LegendNote x={1857} y={696} color="#2a62e0" size={14}>360</LegendNote>
    <LegendNote x={1857} y={720} color="#d9520a" size={14}>1440</LegendNote>
  </ChartSvg>
);

export default function App() {
  return (
    <>
      <GlobalStyle />
      <Page>
        <Header>
          <HeaderRow $tight>
            <Strong>bgoode71</Strong> published on TradingView.com, June 10, 2025 10:01:55 EST
          </HeaderRow>
          <HeaderRow>
            <Strong>BYBIT:BTCUSDT.P, 5</Strong> 108,450.1 <Down>▼</Down> −1,769.8 (−1.61%){' '}
            <Strong>O:</Strong><Down>108,578.0</Down> <Strong>H:</Strong><Down>108,599.5</Down>{' '}
            <Strong>L:</Strong><Down>108,450.0</Down> <Strong>C:</Strong><Down>108,450.1</Down>
          </HeaderRow>
        </Header>

        <Frame>
          <Pane $h={249}>
            <PaneRow>
              <Plot>
                <MainChart />
                <Legend>
                  <LegendTitle>BTCUSDT Perpetual Contract · 5 · BYBIT</LegendTitle>
                  {LEGEND.map((l, i) => (
                    <div key={i}>{l}</div>
                  ))}
                </Legend>
              </Plot>
              <Axis>
                <CurrencyButton>USDT</CurrencyButton>
                <AxisLabel $y={43}>107,000.0</AxisLabel>
                <AxisLabel $y={93}>106,200.0</AxisLabel>
                <AxisLabel $y={144}>105,400.0</AxisLabel>
                <AxisLabel $y={185}>104,800.0</AxisLabel>
                <Tag $y={149} $color="#ffffff" $bold>105,056.8</Tag>
                <Tag $y={166} $color="#2a6fdb">104,967.8</Tag>
                <LowTag $y={187}>Low<LowValue>104,645.4</LowValue></LowTag>
                <Tag $y={211} $color="#2a6fdb">104,264.8</Tag>
                <Tag $y={232} $color="#8a1450">89</Tag>
              </Axis>
            </PaneRow>
          </Pane>

          <Pane $h={129} $line="#3a443c">
            <PaneRow>
              <Plot>
                <TsiChart />
                <PaneTitle $top={8}>TSI</PaneTitle>
              </Plot>
              <Axis>
                <AxisLabel $y={12}>1.00</AxisLabel>
                <Tag $y={14} $color="#6a4fb5">0.84</Tag>
                <AxisLabel $y={65}>0.00</AxisLabel>
                <AxisLabel $y={117}>−1.00</AxisLabel>
              </Axis>
            </PaneRow>
          </Pane>

          <Pane $h={150} $line="#1c4a26">
            <PaneRow>
              <Plot>
                <ParFast />
                <PaneTitle $top={10}>CMP - PAR v1.1</PaneTitle>
              </Plot>
              <Axis>
                <AxisLabel $y={35}>25.00</AxisLabel>
                <Tag $y={46} $color="#c0161f">12.26</Tag>
                <Tag $y={62} $color="#ffffff" $bold>11.02</Tag>
                <Tag $y={80} $color="#14c83c">10.24</Tag>
                <AxisLabel $y={105}>−25.00</AxisLabel>
                <AxisLabel $y={139}>−50.00</AxisLabel>
              </Axis>
            </PaneRow>
          </Pane>

          <Pane $h={260}>
            <PaneRow>
              <Plot>
                <ParSlow />
                <PaneTitle $top={8}>CMP - PAR v1.1</PaneTitle>
              </Plot>
              <Axis>
                <AxisLabel $y={31}>40.00</AxisLabel>
                <Tag $y={50} $color="#2962ff">27.78</Tag>
                <AxisLabel $y={76}>20.00</AxisLabel>
                <Tag $y={82} $color="#d35400">14.01</Tag>
                <Tag $y={108} $color="#14c83c">2.26</Tag>
                <Tag $y={126} $color="#ffffff" $bold>−6.15</Tag>
                <AxisLabel $y={166}>−20.00</AxisLabel>
                <AxisLabel $y={211}>−40.00</AxisLabel>
              </Axis>
            </PaneRow>
            <TimeAxis>
              {TIME_LABELS.map((t, i) => (
                <TimeLabel key={i}>{t}</TimeLabel>
              ))}
            </TimeAxis>
          </Pane>
        </Frame>

        <Footer>
          <svg width="22" height="11" viewBox="0 4 36 18" fill="#d1d4dc">
            <path d="M14 22H7V11H0V4h14v18zM28 22h-8l7.5-18h8L28 22z" />
            <circle cx="20" cy="8" r="4" />
          </svg>
          TradingView
        </Footer>
      </Page>
    </>
  );
}
